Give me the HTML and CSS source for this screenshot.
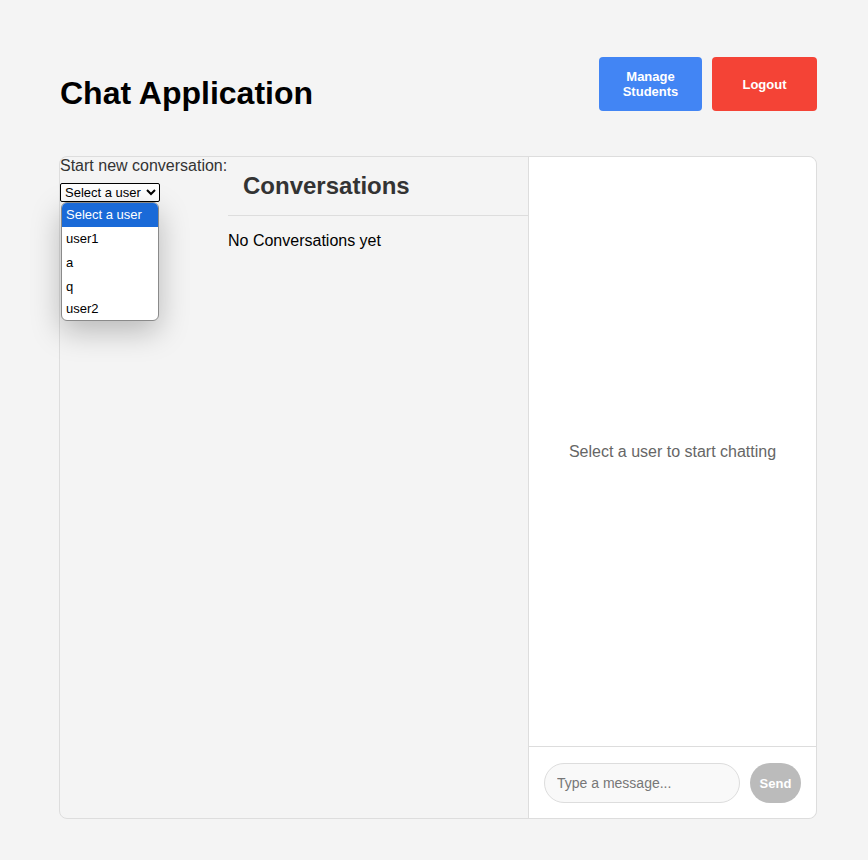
FILE: index.html
```html
<!DOCTYPE html>
<html>
<head>
<meta charset="utf-8">
<link rel="stylesheet" href="styles.css">
</head>
<body>
<div class="app">
  <header class="header">
    <h1 class="title">Chat Application</h1>
    <div class="actions">
      <button class="btn btn-blue">Manage<br>Students</button>
      <button class="btn btn-red">Logout</button>
    </div>
  </header>
  <div class="panel">
    <div class="sidebar">
      <div class="new-conv">
        <label class="new-label">Start new conversation:</label>
        <div class="select-wrap">
          <select class="user-select">
            <option>Select a user</option>
            <option>user1</option>
            <option>a</option>
            <option>q</option>
            <option>user2</option>
          </select>
          <ul class="dropdown">
            <li class="opt active">Select a user</li>
            <li class="opt">user1</li>
            <li class="opt">a</li>
            <li class="opt">q</li>
            <li class="opt">user2</li>
          </ul>
        </div>
      </div>
      <div class="conv-list">
        <h2 class="conv-title">Conversations</h2>
        <p class="empty">No Conversations yet</p>
      </div>
    </div>
    <div class="chat">
      <div class="messages">Select a user to start chatting</div>
      <div class="composer">
        <input class="msg-input" type="text" placeholder="Type a message...">
        <button class="send">Send</button>
      </div>
    </div>
  </div>
</div>
</body>
</html>
```

FILE: styles.css
```css
* { box-sizing: border-box; }
html, body {
  margin: 0;
  padding: 0;
  background: #f4f4f4;
  font-family: "Liberation Sans", Arial, sans-serif;
}
.app {
  width: 757px;
  margin-left: 60px;
  padding-top: 57px;
}
.header {
  display: flex;
  justify-content: space-between;
  align-items: flex-start;
  margin-bottom: 44px;
}
.title {
  margin: 18px 0 0 0;
  font-size: 32px;
  font-weight: bold;
  color: #000;
  line-height: 37px;
}
.actions {
  display: flex;
  gap: 10px;
}
.btn {
  border: none;
  border-radius: 4px;
  color: #fff;
  font-family: "Liberation Sans", Arial, sans-serif;
  font-weight: bold;
  font-size: 13px;
  line-height: 15px;
  height: 54px;
  padding: 0;
}
.btn-blue { background: #4285f4; width: 103px; }
.btn-red { background: #f44336; width: 105px; }

.panel {
  display: flex;
  height: 663px;
  border: 1px solid #ddd;
  border-radius: 8px;
  margin-left: -1px;
  background: #f4f4f4;
}
.sidebar {
  display: flex;
  flex: none;
  width: 469px;
}
.new-conv {
  width: 168px;
  flex-shrink: 0;
}
.new-label {
  display: block;
  font-size: 16px;
  line-height: 18px;
  color: #333;
  margin-bottom: 8px;
  white-space: nowrap;
}
.select-wrap {
  position: relative;
}
.user-select {
  font-family: "Liberation Sans", Arial, sans-serif;
  font-size: 13px;
  width: 100px;
  height: 19px;
  margin: 0;
  color: #000;
  background: #fff;
  border: 1px solid #000;
  border-radius: 2px;
  padding: 0;
}
.dropdown {
  position: absolute;
  left: 1px;
  top: 19px;
  width: 98px;
  margin: 0;
  padding: 0;
  list-style: none;
  background: #fff;
  border: 1px solid #8a8a8a;
  border-radius: 6px;
  overflow: hidden;
  box-shadow: 0 10px 30px rgba(0,0,0,0.25);
  z-index: 10;
}
.opt {
  height: 24px;
  line-height: 24px;
  padding: 0 4px;
  font-size: 13px;
  color: #000;
}
.opt:last-child { height: 21px; line-height: 20px; }
.opt.active {
  background: #1a6ad8;
  color: #fff;
}
.conv-list {
  flex: 1;
  border-right: 1px solid #ddd;
}
.conv-title {
  margin: 0;
  padding: 15px;
  font-size: 24px;
  line-height: 28px;
  color: #333;
  border-bottom: 1px solid #ddd;
}
.empty {
  margin: 16px 0;
  font-size: 16px;
  color: #000;
}
.chat {
  flex: 1;
  min-width: 0;
  display: flex;
  flex-direction: column;
  background: #fff;
  border-radius: 0 8px 8px 0;
}
.messages {
  flex: 1;
  display: flex;
  align-items: center;
  justify-content: center;
  color: #666;
  font-size: 16px;
}
.composer {
  display: flex;
  gap: 10px;
  padding: 16px 15px 15px;
  border-top: 1px solid #ddd;
}
.msg-input {
  flex: 1;
  min-width: 0;
  height: 40px;
  border: 1px solid #ddd;
  border-radius: 20px;
  background: #f9f9f9;
  padding: 0 12px;
  font-family: "Liberation Sans", Arial, sans-serif;
  font-size: 14px;
  color: #333;
}
.msg-input::placeholder { color: #777; }
.send {
  flex: none;
  width: 51px;
  height: 40px;
  border: none;
  border-radius: 20px;
  background: #bbb;
  color: #fff;
  font-family: "Liberation Sans", Arial, sans-serif;
  font-weight: bold;
  font-size: 13px;
  padding: 0;
}
```
